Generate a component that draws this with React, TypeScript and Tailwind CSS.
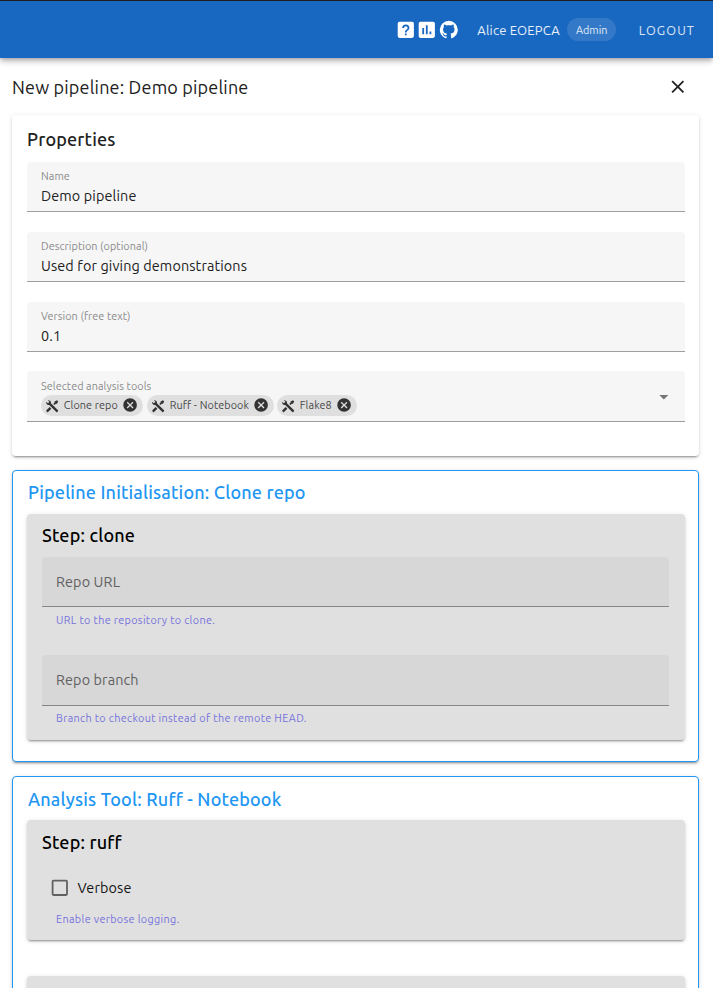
import React from "react";

const PATHS = {
  help: "M11,18H13V16H11V18M12,6A4,4 0 0,0 8,10H10A2,2 0 0,1 12,8A2,2 0 0,1 14,10C14,12 11,11.75 11,15H13C13,12.75 16,12.5 16,10A4,4 0 0,0 12,6M5,3H19A2,2 0 0,1 21,5V19A2,2 0 0,1 19,21H5A2,2 0 0,1 3,19V5A2,2 0 0,1 5,3Z",
  chart: "M9 17H7V10H9V17M13 17H11V7H13V17M17 17H15V14H17V17M19 3H5C3.9 3 3 3.9 3 5V19C3 20.1 3.9 21 5 21H19C20.1 21 21 20.1 21 19V5C21 3.9 20.1 3 19 3Z",
  github: "M12,2A10,10 0 0,0 2,12C2,16.42 4.87,20.17 8.84,21.5C9.34,21.58 9.5,21.27 9.5,21C9.5,20.77 9.5,20.14 9.5,19.31C6.73,19.91 6.14,17.97 6.14,17.97C5.68,16.81 5.03,16.5 5.03,16.5C4.12,15.88 5.1,15.9 5.1,15.9C6.1,15.97 6.63,16.93 6.63,16.93C7.5,18.45 8.97,18 9.54,17.76C9.63,17.11 9.89,16.67 10.17,16.42C7.95,16.17 5.62,15.31 5.62,11.5C5.62,10.39 6,9.5 6.65,8.79C6.55,8.54 6.2,7.5 6.75,6.15C6.75,6.15 7.59,5.88 9.5,7.17C10.29,6.95 11.15,6.84 12,6.84C12.85,6.84 13.71,6.95 14.5,7.17C16.41,5.88 17.25,6.15 17.25,6.15C17.8,7.5 17.45,8.54 17.35,8.79C18,9.5 18.38,10.39 18.38,11.5C18.38,15.32 16.04,16.16 13.81,16.41C14.17,16.72 14.5,17.33 14.5,18.26C14.5,19.6 14.5,20.68 14.5,21C14.5,21.27 14.66,21.59 15.17,21.5C19.14,20.16 22,16.42 22,12A10,10 0 0,0 12,2Z",
  tools: "M21.71 20.29L20.29 21.71A1 1 0 0 1 18.88 21.71L7 9.85A3.81 3.81 0 0 1 6 10A4 4 0 0 1 2.22 4.7L4.76 7.24L5.29 6.71L6.71 5.29L7.24 4.76L4.7 2.22A4 4 0 0 1 10 6A3.81 3.81 0 0 1 9.85 7L21.71 18.88A1 1 0 0 1 21.71 20.29M2.29 18.88A1 1 0 0 0 2.29 20.29L3.71 21.71A1 1 0 0 0 5.12 21.71L10.59 16.25L7.76 13.42M20 2L16 4V6L13.83 8.17L15.83 10.17L18 8H20L22 4Z",
  closeCircle: "M12,2C17.53,2 22,6.47 22,12C22,17.53 17.53,22 12,22C6.47,22 2,17.53 2,12C2,6.47 6.47,2 12,2M15.59,7L12,10.59L8.41,7L7,8.41L10.59,12L7,15.59L8.41,17L12,13.41L15.59,17L17,15.59L13.41,12L17,8.41L15.59,7Z",
  close: "M19,6.41L17.59,5L12,10.59L6.41,5L5,6.41L10.59,12L5,17.59L6.41,19L12,13.41L17.59,19L19,17.59L13.41,12L19,6.41Z",
  menuDown: "M7,10L12,15L17,10H7Z",
  checkbox: "M19,3H5C3.89,3 3,3.89 3,5V19A2,2 0 0,0 5,21H19A2,2 0 0,0 21,19V5C21,3.89 20.1,3 19,3M19,5V19H5V5H19Z",
};

function Icon({ name, className }: { name: keyof typeof PATHS; className: string }) {
  return (
    <svg viewBox="0 0 24 24" fill="currentColor" className={`block shrink-0 ${className}`}>
      <path d={PATHS[name]} />
    </svg>
  );
}

const elevation =
  "shadow-[0_3px_1px_-2px_rgba(0,0,0,0.2),0_2px_2px_0_rgba(0,0,0,0.14),0_1px_5px_0_rgba(0,0,0,0.12)]";

const heading = "text-[18px] leading-7 tracking-[0.18px]";
const body = "text-[14.4px] tracking-[0.115px]";
const hintText = "text-[10.8px] leading-4 tracking-[0.35px] text-[#7672dc]";

function FilledField({ label, value }: { label: string; value: string }) {
  return (
    <div className="flex h-[50px] flex-col rounded-t-[4px] border-b border-[#9e9e9e] bg-[#f6f6f6] px-[14px] pt-[6px]">
      <span className="text-[10.8px] leading-4 tracking-[0.08px] text-[#8a8a8a]">{label}</span>
      <span className={`leading-6 text-[#212121] ${body}`}>{value}</span>
    </div>
  );
}

function Chip({ label, width }: { label: string; width: string }) {
  return (
    <div className={`flex h-[21px] items-center rounded-full bg-[#dfdfdf] pl-[4px] text-[#333] ${width}`}>
      <Icon name="tools" className="mt-px size-[14.4px]" />
      <span className="ml-[4.4px] flex-1 whitespace-nowrap pb-px text-[10.8px] leading-5 tracking-[0.1px] text-[#484848]">{label}</span>
      <Icon name="closeCircle" className="mr-[4.4px] size-[16.2px]" />
    </div>
  );
}

function EmptyField({ label, hint, size, hintPad }: { label: string; hint: string; size: string; hintPad: string }) {
  return (
    <div>
      <div className={`flex items-center rounded-t-[4px] border-b border-[#868686] bg-[#d7d7d7] px-[14px] text-[#616161] ${body} ${size}`}>
        {label}
      </div>
      <p className={`px-[14px] ${hintPad} ${hintText}`}>{hint}</p>
    </div>
  );
}

export default function App() {
  return (
    <div className="flex h-[988px] w-[713px] flex-col overflow-hidden bg-white font-['Ubuntu','Noto_Sans',sans-serif] text-[#212121]">
      <header className="z-10 flex h-[58px] shrink-0 items-center border-t border-[#1e1e1e] bg-[#1867c0] text-white shadow-[0_2px_4px_-1px_rgba(0,0,0,0.2),0_4px_5px_0_rgba(0,0,0,0.14),0_1px_10px_0_rgba(0,0,0,0.12)]">
        <div className="ml-[394.7px] flex items-center">
          <Icon name="help" className="size-[21.6px]" />
          <Icon name="chart" className="size-[21.6px]" />
          <Icon name="github" className="size-[21.6px]" />
        </div>
        <span className="ml-[17.8px] w-[84px] whitespace-nowrap pt-[2px] text-[13px] tracking-[0.22px] text-white/90">Alice EOEPCA</span>
        <span className="ml-[5.5px] flex h-[23px] w-[49px] items-center justify-center rounded-full bg-white/12 pl-px pt-px text-[10.8px] text-white/85">Admin</span>
        <span className="ml-[23px] whitespace-nowrap pt-[2px] text-[12.6px] tracking-[1.12px] text-white/85">LOGOUT</span>
      </header>

      <div className="flex h-[57px] shrink-0 items-center justify-between pl-3 pr-[24px]">
        <h1 className={heading}>New pipeline: Demo pipeline</h1>
        <Icon name="close" className="size-[21.6px]" />
      </div>

      <main className="flex flex-col gap-[14px] pl-3 pr-[14px]">
        <section className={`h-[341px] shrink-0 rounded-[4px] bg-white pl-[15px] pr-[14px] pt-[10px] ${elevation}`}>
          <h2 className={`h-[37px] font-medium ${heading}`}>Properties</h2>
          <div className="flex flex-col gap-5">
            <FilledField label="Name" value="Demo pipeline" />
            <FilledField label="Description (optional)" value="Used for giving demonstrations" />
            <FilledField label="Version (free text)" value="0.1" />
            <div className="-mt-px flex h-[51px] justify-between rounded-t-[4px] border-b border-[#9e9e9e] bg-[#f6f6f6] pl-[14px] pr-[10.5px]">
              <div className="flex flex-col pt-[7px]">
                <span className="text-[10.8px] leading-4 tracking-[0.08px] text-[#8a8a8a]">Selected analysis tools</span>
                <div className="mt-px flex">
                  <Chip label="Clone repo" width="w-[102px] mr-[4px]" />
                  <Chip label="Ruff - Notebook" width="w-[127px] mr-[3px]" />
                  <Chip label="Flake8" width="w-[80px]" />
                </div>
              </div>
              <Icon name="menuDown" className="mt-[15px] size-[21.6px] text-[#757575]" />
            </div>
          </div>
        </section>

        <section className={`h-[292px] shrink-0 rounded-[4px] border border-[#2196f3] bg-white pl-[14px] pr-[13px] pt-[7px] ${elevation}`}>
          <h2 className={`h-[36px] pl-px font-medium text-[#2196f3] ${heading}`}>Pipeline Initialisation: Clone repo</h2>
          <div className={`h-[226px] rounded-[4px] bg-[#e0e0e0] pl-[15px] pr-[16px] pt-[7px] ${elevation}`}>
            <h3 className={`h-[36px] font-medium text-black ${heading}`}>Step: clone</h3>
            <div className="flex flex-col gap-[27px]">
              <EmptyField label="Repo URL" hint="URL to the repository to clone." size="h-[50px] pt-[2px]" hintPad="pt-[5px]" />
              <EmptyField label="Repo branch" hint="Branch to checkout instead of the remote HEAD." size="h-[51px] pt-[2px]" hintPad="pt-[4px]" />
            </div>
          </div>
        </section>

        <section className={`h-[320px] shrink-0 rounded-[4px] border border-[#2196f3] bg-white pl-[14px] pr-[13px] pt-[8px] ${elevation}`}>
          <h2 className={`h-[35px] pl-px font-medium text-[#2196f3] ${heading}`}>Analysis Tool: Ruff - Notebook</h2>
          <div className={`h-[120px] rounded-[4px] bg-[#e0e0e0] px-[15px] pt-[8px] ${elevation}`}>
            <h3 className={`h-[49px] font-medium text-black ${heading}`}>Step: ruff</h3>
            <label className={`flex h-[22px] items-center pl-[7px] text-[#141414] ${body}`}>
              <Icon name="checkbox" className="mr-[7px] size-[21.6px] text-[#616161]" />
              <span className="pt-[2px]">Verbose</span>
            </label>
            <p className={`px-[14px] pt-[12px] ${hintText}`}>Enable verbose logging.</p>
          </div>
          <div className={`mt-[36px] h-[100px] rounded-[4px] bg-[#e0e0e0] ${elevation}`} />
        </section>
      </main>
    </div>
  );
}
